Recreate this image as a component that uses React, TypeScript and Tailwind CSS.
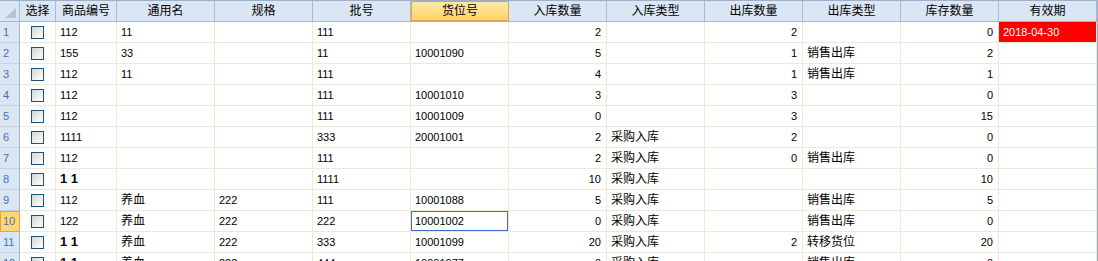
const headers = ['通用名', '规格', '批号', '货位号', '入库数量', '入库类型', '出库数量', '出库类型', '库存数量', '有效期']

// 右对齐的列 (按 headers 下标)
const rightCols = [4, 6, 8]

const rows: string[][] = [
  ['112', '11', '', '111', '', '2', '', '2', '', '0', '2018-04-30'],
  ['155', '33', '', '11', '10001090', '5', '', '1', '销售出库', '2', ''],
  ['112', '11', '', '111', '', '4', '', '1', '销售出库', '1', ''],
  ['112', '', '', '111', '10001010', '3', '', '3', '', '0', ''],
  ['112', '', '', '111', '10001009', '0', '', '3', '', '15', ''],
  ['1111', '', '', '333', '20001001', '2', '采购入库', '2', '', '0', ''],
  ['112', '', '', '111', '', '2', '采购入库', '0', '销售出库', '0', ''],
  ['1 1', '', '', '1111', '', '10', '采购入库', '', '', '10', ''],
  ['112', '养血', '222', '111', '10001088', '5', '采购入库', '', '销售出库', '5', ''],
  ['122', '养血', '222', '222', '10001002', '0', '采购入库', '', '销售出库', '0', ''],
  ['1 1', '养血', '222', '333', '10001099', '20', '采购入库', '2', '转移货位', '20', ''],
  ['1 1', '养血', '222', '444', '10001077', '0', '采购入库', '', '销售出库', '0', ''],
]

function CellText({ v }: { v: string }) {
  if (v === '1 1') return <span className="text-[13px] font-bold whitespace-pre">{v}</span>
  if (/^[\d-]+$/.test(v)) return <span className="text-[11px]">{v}</span>
  return <span className="text-[12px]">{v}</span>
}

function CheckBox() {
  return <div className="w-[13px] h-[13px] border border-[#1c5180] bg-linear-to-br from-[#d6d6d0] to-white" />
}

export default function App() {
  return (
    <div
      className="w-[1098px] h-[261px] overflow-hidden bg-white border-t border-[#9cb0ca] border-r text-black"
      style={{ fontFamily: "'Liberation Sans', 'Noto Sans CJK SC', sans-serif" }}
    >
      {/* 表头 */}
      <div className="flex h-[21px] bg-[#dae6f4] border-b border-[#9eb6ce]">
        <div className="w-[20px] border-r border-[#a7bbd5] relative">
          <svg className="absolute left-0 top-0" width="20" height="20" viewBox="0 0 20 20">
            <polygon points="16,7 16,17 5,17" fill="#b3c3d8" />
          </svg>
        </div>
        <div className="w-[36px] border-r border-[#a7bbd5] flex items-center justify-center text-[12px]">选择</div>
        <div className="w-[61px] border-r border-[#a7bbd5] flex items-center justify-center text-[12px]">商品编号</div>
        {headers.map((h, i) => (
          <div
            key={h}
            className={
              i === 3
                ? 'w-[98px] border border-[#e0a445] bg-linear-to-b from-[#ffe9a8] to-[#ffd264] flex items-center justify-center text-[12px]'
                : 'w-[98px] border-r border-[#a7bbd5] flex items-center justify-center text-[12px]'
            }
          >
            {h}
          </div>
        ))}
      </div>

      {/* 数据行 */}
      {rows.map((r, ri) => (
        <div key={ri} className="flex h-[21px]">
          <div
            className={
              ri === 9
                ? 'w-[20px] bg-[#ffd873] border border-[#e0a445] text-[#3f72b8] text-[11px] flex items-center pl-[2px]'
                : 'w-[20px] bg-[#dae6f4] border-r border-[#9eb6ce] border-b border-b-[#c3d3e6] text-[#3f72b8] text-[11px] flex items-center pl-[3px]'
            }
          >
            {ri + 1}
          </div>
          <div className="w-[36px] border-r border-b border-[#ece9d8] flex items-center justify-center">
            <CheckBox />
          </div>
          <div className="w-[61px] border-r border-b border-[#ece9d8] flex items-center px-[4px]">
            <CellText v={r[0]} />
          </div>
          {r.slice(1).map((v, ci) => {
            const right = rightCols.includes(ci)
            const red = ci === 9 && v !== ''
            const selected = ri === 9 && ci === 3
            return (
              <div
                key={ci}
                className={[
                  'w-[98px] border-r border-b border-[#ece9d8] flex items-center px-[4px]',
                  right ? 'justify-end pr-[5px]' : '',
                  red ? 'bg-[#ff0000] text-white' : '',
                  selected ? 'shadow-[inset_0_0_0_1px_#3b6fc6]' : '',
                ].join(' ')}
              >
                <CellText v={v} />
              </div>
            )
          })}
        </div>
      ))}
    </div>
  )
}
